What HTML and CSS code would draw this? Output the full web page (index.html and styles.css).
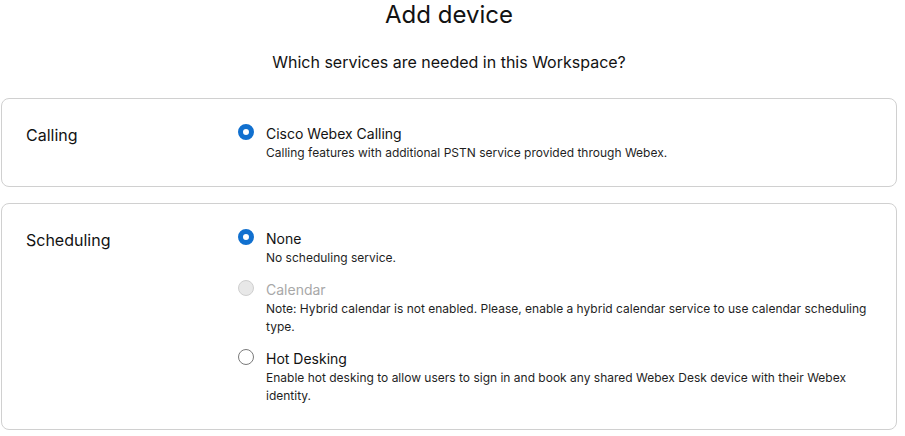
FILE: index.html
```html
<!DOCTYPE html>
<html lang="en">
<head>
    <meta charset="UTF-8">
    <title>Add device</title>
    <link rel="stylesheet" href="styles.css">
</head>
<body>
    <div class="wrap">
        <h1 class="title">Add device</h1>
        <p class="question">Which services are needed in this Workspace?</p>

        <!-- 통화 서비스 -->
        <div class="card">
            <div class="label">Calling</div>
            <div class="options">
                <div class="opt">
                    <span class="radio on"></span>
                    <div class="txt">
                        <div class="name">Cisco Webex Calling</div>
                        <div class="desc">Calling features with additional PSTN service provided through Webex.</div>
                    </div>
                </div>
            </div>
        </div>

        <!-- 예약 서비스 -->
        <div class="card">
            <div class="label">Scheduling</div>
            <div class="options">
                <div class="opt">
                    <span class="radio on"></span>
                    <div class="txt">
                        <div class="name">None</div>
                        <div class="desc">No scheduling service.</div>
                    </div>
                </div>
                <div class="opt">
                    <span class="radio off"></span>
                    <div class="txt">
                        <div class="name dim">Calendar</div>
                        <div class="desc">Note: Hybrid calendar is not enabled. Please, enable a hybrid calendar service to use calendar scheduling type.</div>
                    </div>
                </div>
                <div class="opt">
                    <span class="radio"></span>
                    <div class="txt">
                        <div class="name">Hot Desking</div>
                        <div class="desc">Enable hot desking to allow users to sign in and book any shared Webex Desk device with their Webex identity.</div>
                    </div>
                </div>
            </div>
        </div>
    </div>
</body>
</html>
```

FILE: styles.css
```css
body {
    margin: 0;
    font-family: Inter, "Noto Sans", sans-serif;
    color: #121212;
    background: #fff;
}

.wrap {
    padding: 0 8px 0 1px;
}

.title {
    margin: 0;
    font-size: 24px;
    line-height: 30px;
    font-weight: 400;
    text-align: center;
}

.question {
    margin: 20px 0 24px;
    font-size: 16px;
    line-height: 24px;
    text-align: center;
}

/* 카드 박스 */
.card {
    display: grid;
    grid-template-columns: 212px 1fr;
    padding: 25px 24px 24px 24px;
    border: 1px solid #d0d0d0;
    border-radius: 8px;
    margin-bottom: 16px;
}

.label {
    font-size: 16px;
    line-height: 22px;
}

.options {
    display: flex;
    flex-direction: column;
    gap: 13px;
}

.opt {
    display: flex;
    gap: 12px;
}

/* 라디오 버튼 */
.radio {
    flex: none;
    box-sizing: border-box;
    width: 16px;
    height: 16px;
    border-radius: 50%;
    border: 1px solid #7a7a7a;
    background: #fff;
}
.radio.on {
    border: 5px solid #1170cf;
}
.radio.off {
    border-color: #cfcfcf;
    background: #e8e8e8;
}

.name {
    font-size: 14px;
    line-height: 20px;
}
.name.dim {
    color: #a8a8a8;
}

.desc {
    font-size: 12px;
    line-height: 18px;
    color: #1f1f1f;
}
```
